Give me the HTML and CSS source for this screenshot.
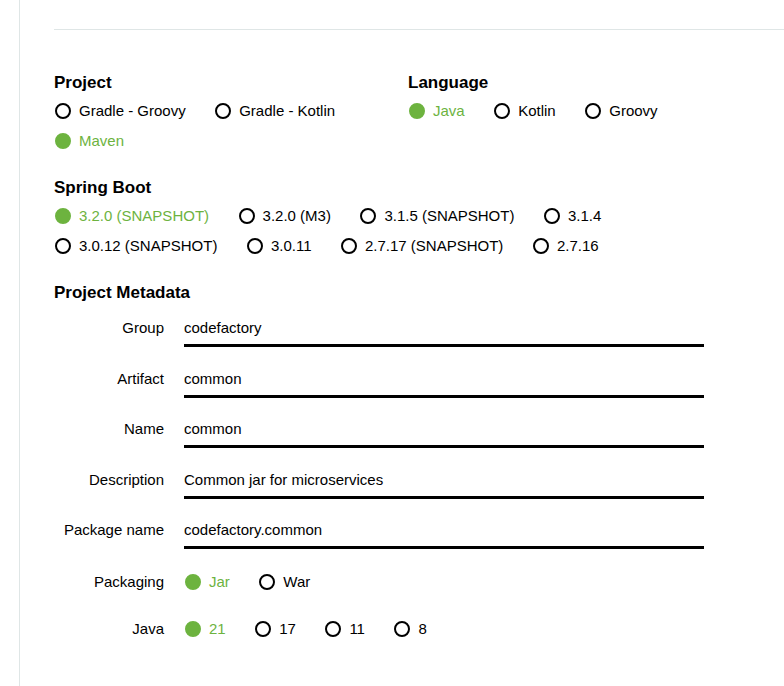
FILE: index.html
```html
<!DOCTYPE html>
<html lang="en">
<head>
<meta charset="utf-8">
<title>Spring Initializr</title>
<link rel="stylesheet" href="styles.css">
</head>
<body>
<div class="page">
  <div class="topbar"></div>
  <div class="content">
    <div class="cols">
      <section class="group">
        <h2 class="heading">Project</h2>
        <div class="radios wrap">
          <label class="radio"><span class="dot"></span>Gradle - Groovy</label>
          <label class="radio"><span class="dot"></span>Gradle - Kotlin</label>
          <label class="radio checked"><span class="dot"></span>Maven</label>
        </div>
      </section>
      <section class="group">
        <h2 class="heading">Language</h2>
        <div class="radios">
          <label class="radio checked"><span class="dot"></span>Java</label>
          <label class="radio"><span class="dot"></span>Kotlin</label>
          <label class="radio"><span class="dot"></span>Groovy</label>
        </div>
      </section>
    </div>

    <section class="group">
      <h2 class="heading">Spring Boot</h2>
      <div class="radios">
        <label class="radio checked"><span class="dot"></span>3.2.0 (SNAPSHOT)</label>
        <label class="radio"><span class="dot"></span>3.2.0 (M3)</label>
        <label class="radio"><span class="dot"></span>3.1.5 (SNAPSHOT)</label>
        <label class="radio"><span class="dot"></span>3.1.4</label>
      </div>
      <div class="radios">
        <label class="radio"><span class="dot"></span>3.0.12 (SNAPSHOT)</label>
        <label class="radio"><span class="dot"></span>3.0.11</label>
        <label class="radio"><span class="dot"></span>2.7.17 (SNAPSHOT)</label>
        <label class="radio"><span class="dot"></span>2.7.16</label>
      </div>
    </section>

    <section class="group">
      <h2 class="heading">Project Metadata</h2>
      <div class="meta">
        <div class="field"><span class="label">Group</span><span class="input">codefactory</span></div>
        <div class="field"><span class="label">Artifact</span><span class="input">common</span></div>
        <div class="field"><span class="label">Name</span><span class="input">common</span></div>
        <div class="field"><span class="label">Description</span><span class="input">Common jar for microservices</span></div>
        <div class="field"><span class="label">Package name</span><span class="input">codefactory.common</span></div>
        <div class="field radio-field"><span class="label">Packaging</span>
          <div class="radios">
            <label class="radio checked"><span class="dot"></span>Jar</label>
            <label class="radio"><span class="dot"></span>War</label>
          </div>
        </div>
        <div class="field radio-field java"><span class="label">Java</span>
          <div class="radios">
            <label class="radio checked"><span class="dot"></span>21</label>
            <label class="radio"><span class="dot"></span>17</label>
            <label class="radio"><span class="dot"></span>11</label>
            <label class="radio"><span class="dot"></span>8</label>
          </div>
        </div>
      </div>
    </section>
  </div>
</div>
</body>
</html>
```

FILE: styles.css
```css
html, body {
  margin: 0;
  padding: 0;
  background: #fff;
}
body {
  font-family: "Liberation Sans", Arial, sans-serif;
  font-size: 15px;
  color: #000;
  overflow: hidden;
}
.page {
  margin-left: 19px;
  border-left: 1px solid #dfe6e6;
  min-height: 100vh;
  box-sizing: border-box;
  padding-left: 34px;
}
.topbar {
  height: 29px;
  border-bottom: 1px solid #dfe6e6;
}
.content {
  padding-top: 43px;
}
.cols {
  display: grid;
  grid-template-columns: 354px 1fr;
}
.group {
  margin-bottom: 22px;
}
.heading {
  margin: 0 0 3px 0;
  font-size: 17px;
  line-height: 20px;
  font-weight: bold;
}
.radios {
  display: flex;
  flex-wrap: wrap;
  column-gap: 29.5px;
  padding-left: 1px;
}
.radios.wrap {
  max-width: 320px;
}
.radio {
  display: flex;
  align-items: center;
  height: 30px;
  line-height: 30px;
  cursor: pointer;
}
.dot {
  width: 16px;
  height: 16px;
  box-sizing: border-box;
  border: 2px solid #000;
  border-radius: 50%;
  margin-right: 8px;
  flex: none;
}
.radio.checked {
  color: #6db33f;
}
.radio.checked .dot {
  background: #6db33f;
  border-color: #6db33f;
}
.meta {
  padding-top: 7px;
}
.field {
  display: flex;
  align-items: flex-start;
  margin-bottom: 16.5px;
}
.label {
  width: 110px;
  text-align: right;
  padding-right: 20px;
  padding-top: 6px;
  line-height: 17px;
  flex: none;
}
.input {
  display: block;
  width: 520px;
  padding: 6px 0 8px 0;
  line-height: 17px;
  border-bottom: 3px solid #000;
}
.radio-field {
  align-items: center;
  padding-top: 1px;
  margin-bottom: 17px;
}
.radio-field .label {
  padding-top: 0;
}
.radio-field.java {
  padding-top: 0;
}
```
